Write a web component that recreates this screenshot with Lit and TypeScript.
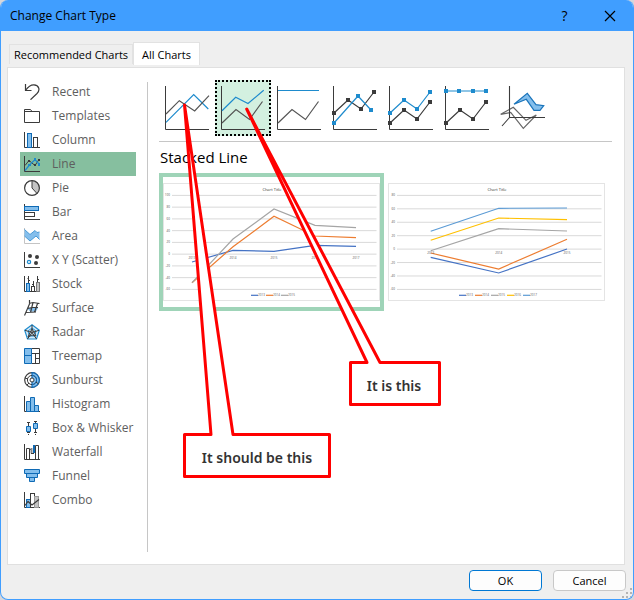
import { LitElement, html, svg, css } from "lit";
import { customElement, property, state } from "lit/decorators.js";
import { classMap } from "lit/directives/class-map.js";

const INK = "#3b3b3b";
const BLUE = "#1e8bcd";
const EDGE = "#0f6ab5";
const SKY = "#83beec";
const GREY = "#c4c4c4";

const axis = svg`<path d="M.5 0V15.5H16" stroke=${INK} fill="none"/>`;

const categories = [
  { name: "Recent", icon: svg`<path d="M1.5 0V6.5H7.5M1.5 6.5C4 3 7 .7 10 .9C15 1.2 16.5 6 13 9.5L6.5 15.7" fill="none" stroke=${INK} stroke-width="1.2"/>` },
  { name: "Templates", icon: svg`<path d="M.5 14.5V1.5H6.5L8 3.5H15.5V14.5ZM.5 3.5H8" fill="#fff" stroke=${INK}/>` },
  { name: "Column", icon: svg`${axis}<rect x="3.5" y="1.5" width="4" height="14" fill=${SKY} stroke=${EDGE}/><rect x="9.5" y="5.5" width="4" height="10" fill="#fff" stroke=${INK}/>` },
  { name: "Line", icon: svg`${axis}<path d="M1 9.5L5 4.5L11 9.5L15 3.5" fill="none" stroke=${INK}/><path d="M4 4h2v2H4zM10 8h2v2h-2zM14 3h2v2h-2z" fill=${INK}/><path d="M1 14.5L5.5 9L11 3.5L15 8" fill="none" stroke=${BLUE} stroke-width="1.2"/><path d="M4 8h3v2H4zM10 2h2v3h-2zM14 7h2v3h-2z" fill=${BLUE}/>` },
  { name: "Pie", icon: svg`<circle cx="8" cy="8" r="7.4" fill="#fff"/><path d="M8 8V.5A7.5 7.5 0 0 1 13 13.5Z" fill=${GREY}/><circle cx="8" cy="8" r="7.4" fill="none" stroke=${INK} stroke-width="1.2"/><path d="M8 .5V8L13 13.5" fill="none" stroke=${INK}/>` },
  { name: "Bar", icon: svg`${axis}<rect x=".5" y="2.5" width="14" height="4" fill=${SKY} stroke=${EDGE}/><rect x=".5" y="8.5" width="10" height="4" fill="#fff" stroke=${INK}/>` },
  { name: "Area", icon: svg`<path d="M.5 0V15.5H16" stroke=${GREY} fill="none"/><path d="M.5 1.5L6 6.5L11 2.5L13 4.5L15.5 4V11.5L12 8L6 13L.5 8Z" fill=${SKY}/><path d="M.5 1.5L6 6.5L11 2.5L13 4.5L15.5 4M.5 8L6 13L12 8L15.5 11.5" fill="none" stroke="#4a9ad6"/>` },
  { name: "X Y (Scatter)", icon: svg`${axis}<circle cx="6" cy="4" r="2" fill=${INK}/><circle cx="13" cy="5" r="2" fill=${INK}/><circle cx="12" cy="11" r="2" fill=${INK}/><circle cx="5" cy="10" r="1.6" fill="#fff" stroke=${BLUE} stroke-width="1.3"/>` },
  { name: "Stock", icon: svg`${axis}<path d="M4.5 0V7M3.5 2.5H4.5M4.5 4.5H6M9.5 5V10M8 8.5H9.5M13.5 0V6M13.5 3.5H15" stroke=${INK} fill="none"/><rect x="2.5" y="7.5" width="3" height="8" fill=${SKY} stroke=${EDGE}/><rect x="7.5" y="10.5" width="3" height="5" fill="#fff" stroke=${INK}/><rect x="12.5" y="6.5" width="3" height="9" fill=${GREY} stroke="#777"/>` },
  { name: "Surface", icon: svg`<path d="M3 8L6 11.5H12L14 8Z" fill=${SKY}/><path d="M5.5 0V4L.5 15.5M5 3.5L9 2.5L15.5 3.5M3.5 8.5L8 7.5H14M2 12.5L12 12M9 2.5L6.5 12.5M13.5 3.5L10.5 12.5" fill="none" stroke=${INK} stroke-width="1.2"/>` },
  { name: "Radar", icon: svg`<path d="M8 .8L15.3 6.2L12.5 15H3.5L.7 6.2Z" fill="#d9ebf8" stroke=${BLUE} stroke-width="1.2"/><path d="M8 4L12 7L10.6 12H5.4L4 7Z" fill="none" stroke=${BLUE}/><path d="M8 1V8.5L15 6.3M8 8.5L12.5 15M8 8.5L3.5 15M8 8.5L1 6.3M8 5L10 8L12 12L8 11L4 13L6 8.5Z" fill="none" stroke=${INK}/>` },
  { name: "Treemap", icon: svg`<rect x=".5" y=".5" width="7" height="15" fill=${SKY}/><path d="M7.5 .5H15.5V15.5H7.5M7.5 5.5H15.5M11.5 5.5V15.5M11.5 10.5H15.5" fill="none" stroke=${INK}/><path d="M.5 .5H7.5V15.5H.5ZM.5 7.5H7.5" fill="none" stroke=${EDGE}/>` },
  { name: "Sunburst", icon: svg`<circle cx="8" cy="8" r="7.3" fill="#fff" stroke=${INK} stroke-width="1.2"/><path d="M8 .7A7.3 7.3 0 0 1 8 15.3Z" fill=${SKY} stroke=${EDGE} stroke-width="1.2"/><circle cx="8" cy="8" r="4.6" fill="none" stroke=${INK}/><path d="M8 3.4A4.6 4.6 0 0 1 8 12.6" fill="none" stroke=${EDGE}/><circle cx="8" cy="8" r="2" fill="#fff" stroke=${INK}/><path d="M1 6L4 7M3 13L5 11M12 10L14.5 12" stroke=${INK}/>` },
  { name: "Histogram", icon: svg`${axis}<path d="M2.5 15.5V5.5H6.5V1.5H10.5V9.5H14.5V15.5ZM6.5 5.5V15.5M10.5 9.5V15.5" fill=${SKY} stroke=${EDGE}/>` },
  { name: "Box & Whisker", icon: svg`<path d="M4.5 2V13M3 2.5H6M3 12.5H6M4.5 14V15M11.5 1V13M10 1.5H13M10 12.5H13M11.5 14V15" stroke=${INK} fill="none"/><path d="M2.5 6.5h4v5h-4zM9.5 3.5h4v5h-4z" fill=${SKY} stroke=${EDGE}/>` },
  { name: "Waterfall", icon: svg`${axis}<path d="M2.5 15.5V4.5H5.5V15.5M5.5 5.5H7.5V9M11.5 15.5V1.5H14.5V15.5" fill="none" stroke=${INK}/><path d="M7.5 4V9.5" stroke="#888" stroke-width="2"/><path d="M10 1V9" stroke=${EDGE} stroke-width="2"/><path d="M7 9.5H10" stroke=${INK}/>` },
  { name: "Funnel", icon: svg`<path d="M.5 1.5h15v4H.5zM2.5 5.5h11v4h-11zM5.5 9.5h5v4h-5z" fill=${SKY} stroke=${EDGE}/>` },
  { name: "Combo", icon: svg`${axis}<rect x="2.5" y="7.5" width="4" height="8" fill=${SKY} stroke=${EDGE}/><rect x="6.5" y="1.5" width="4" height="14" fill="#fff" stroke=${INK}/><rect x="10.5" y="4.5" width="4" height="11" fill=${GREY} stroke="#999"/><path d="M1 13.5L4 9.5L8 13L15 7.5" fill="none" stroke=${INK} stroke-width="1.2"/>` },
];

type Pt = [number, number];
const toPoints = (p: Pt[]) => p.map((q) => q.join(",")).join(" ");
const line = (p: Pt[], color: string) =>
  svg`<polyline points=${toPoints(p)} fill="none" stroke=${color} stroke-width="1.2"/>`;
const marked = (p: Pt[], color: string) =>
  svg`${line(p, color)}${p.map(([x, y]) => svg`<rect x=${x - 2} y=${y - 2} width="4" height="4" fill=${color}/>`)}`;
const bigAxis = svg`<path d="M6.5 6V49.5H50" fill="none" stroke=${INK}/>`;
const LOW: Pt[] = [[7, 43], [21, 29.5], [34.5, 39.5], [47.5, 21.5]];

const lineTypes = [
  { name: "Line", icon: svg`${bigAxis}${line([[7, 42.3], [34.7, 14.5], [49.3, 29]], BLUE)}${line([[7, 34], [20.3, 20.7], [35.7, 31], [50, 15.7]], "#555")}` },
  { name: "Stacked Line", icon: svg`${bigAxis}${line([[7, 30.7], [20.7, 17.3], [33, 23.5], [48.7, 10.3]], BLUE)}${line(LOW, "#555")}` },
  { name: "100% Stacked Line", icon: svg`${bigAxis}${line([[7, 10.5], [48, 10.5]], BLUE)}${line(LOW, "#555")}` },
  { name: "Line with Markers", icon: svg`${bigAxis}${marked([[7, 33], [21, 20], [34, 29], [47, 12]], INK)}${marked([[7, 43], [31, 16], [44, 30]], BLUE)}` },
  { name: "Stacked Line with Markers", icon: svg`${bigAxis}${marked([[7, 33], [21, 20], [34, 29], [47, 12]], BLUE)}${marked([[7, 43], [21, 30], [34, 39], [47, 22]], INK)}` },
  { name: "100% Stacked Line with Markers", icon: svg`${bigAxis}${marked([[7, 11], [20, 11], [34, 11], [47, 11]], BLUE)}${marked([[7, 43], [21, 30], [34, 39], [47, 22]], INK)}` },
  {
    name: "3-D Line",
    icon: svg`<path d="M5.7 34.3L18.3 27.3L31 40.3L41.3 35L28.3 48.3L15.7 32.5Z" fill="#fff" stroke="#666" stroke-width="1.2"/>
      <path d="M14.5 6V37.5H50M14.5 37.5L7 46" fill="none" stroke=${INK} stroke-width="1.1"/>
      <path d="M19 24.3L32.3 13.3L41 24.7L48.7 25.7L45 30.3H39L31.3 19.3Z" fill=${SKY} stroke="#1b75bb" stroke-width="1.2"/>`,
  },
];

interface Chart {
  name: string;
  ticks: number[];
  step: number;
  xs: number[];
  labels: string[];
  labelY: number;
  legendX: number;
  legendStep: number;
  series: { name: string; color: string; ys: number[] }[];
}

const charts: Chart[] = [
  {
    name: "Stacked line by year",
    ticks: [100, 80, 60, 40, 20, 0, -20, -40, -60],
    step: 11.75,
    xs: [29, 70, 111, 152, 193],
    labels: ["2013", "2014", "2015", "2016", "2017"],
    labelY: 76,
    legendX: 88,
    legendStep: 15,
    series: [
      { name: "2013", color: "#4472c4", ys: [79, 67.3, 68.3, 62.3, 63.3] },
      { name: "2014", color: "#ed7d31", ys: [99.7, 63.7, 33.3, 53, 54.7] },
      { name: "2015", color: "#a5a5a5", ys: [99.7, 56, 26, 42.3, 44.7] },
    ],
  },
  {
    name: "Stacked line by series",
    ticks: [80, 60, 40, 20, 0, -20, -40, -60],
    step: 13.43,
    xs: [42.7, 110.7, 179],
    labels: ["2013", "2014", "2015"],
    labelY: 71,
    legendX: 71,
    legendStep: 16,
    series: [
      { name: "2013", color: "#4472c4", ys: [74.3, 90, 66] },
      { name: "2014", color: "#ed7d31", ys: [70, 86, 56.3] },
      { name: "2015", color: "#a5a5a5", ys: [67.7, 45.7, 48] },
      { name: "2016", color: "#ffc000", ys: [57.3, 35, 36.7] },
      { name: "2017", color: "#5b9bd5", ys: [48.3, 25.3, 25] },
    ],
  },
];

@customElement("chart-preview")
class ChartPreview extends LitElement {
  @property({ attribute: false }) chart!: Chart;

  static styles = css`
    :host { display: block; }
    svg { display: block; width: 217px; height: 118px; }
    text { font-family: "Open Sans", sans-serif; font-size: 3px; fill: #555; }
    .title { font-size: 4px; fill: #333; }
    .frame { fill: #fff; stroke: #e4e4e4; }
    .grid { stroke: #d9d9d9; }
  `;

  render() {
    const c = this.chart;
    return html`<svg viewBox="0 0 217 118" aria-hidden="true">
      <rect class="frame" x=".5" y=".5" width="216" height="117" />
      <text class="title" x="109" y="8" text-anchor="middle">Chart Title</text>
      ${c.ticks.map((t, i) => {
        const y = 12.4 + i * c.step;
        return svg`<path class="grid" d="M9 ${y}H213.5"/><text x="7" y=${y + 1} text-anchor="end">${t}</text>`;
      })}
      ${c.series.map((s) => line(c.xs.map((x, i): Pt => [x, s.ys[i]]), s.color))}
      ${c.labels.map((l, i) => svg`<text x=${c.xs[i]} y=${c.labelY} text-anchor="middle">${l}</text>`)}
      ${c.series.map((s, i) => {
        const x = c.legendX + i * c.legendStep;
        return svg`${line([[x, 112.3], [x + 7, 112.3]], s.color)}<text x=${x + 7} y="113.4">${s.name}</text>`;
      })}
    </svg>`;
  }
}

@customElement("app-root")
class AppRoot extends LitElement {
  @state() private category = "Line";
  @state() private lineType = "Stacked Line";
  @state() private preview = 0;

  static styles = css`
    :host {
      display: block;
      min-height: 100vh;
      background: #d6d6da;
      font-family: "Open Sans", "Noto Sans", sans-serif;
      font-size: 12px;
      color: #000;
    }
    * { box-sizing: border-box; }
    button { font: inherit; color: inherit; background: none; border: 0; padding: 0; margin: 0; }
    svg { display: block; }
    .dialog {
      position: relative;
      display: flex;
      flex-direction: column;
      min-height: 100vh;
      border: 1px solid #409eff;
      border-top: 0;
      border-radius: 8px;
      background: #efefef;
      overflow: hidden;
    }
    .titlebar {
      display: flex;
      align-items: center;
      height: 31px;
      padding: 0 1px 0 9px;
      background: #409eff;
    }
    .titlebar h1 { flex: 1; margin: 0; font-size: 12px; font-weight: 400; }
    .caption { display: grid; place-items: center; width: 45px; height: 31px; font-size: 14px; }
    .tabs { display: flex; align-items: flex-start; height: 36px; padding: 11px 8px 0; font-size: 11px; }
    .tab {
      height: 20px;
      margin-top: 2px;
      padding: 0 4px;
      border: 1px solid #e2e2e2;
      border-bottom: 0;
      white-space: nowrap;
    }
    .tab.active { height: 23px; margin-top: 0; padding: 0 8px; background: #fff; }
    .panel {
      flex: 1;
      display: flex;
      margin: 0 8px 0 6px;
      padding: 12px;
      border: 1px solid #e0e0e0;
      background: #fff;
    }
    .categories { flex: none; width: 116px; margin: 0; padding: 0; list-style: none; }
    .category {
      display: flex;
      align-items: center;
      gap: 12px;
      width: 100%;
      height: 24px;
      padding-left: 4px;
      color: #5e5e5e;
      line-height: 16px;
      white-space: nowrap;
    }
    .category.active { background: #86bf9f; }
    .category svg { flex: none; width: 16px; height: 16px; }
    .rule { flex: none; width: 1px; margin: 2px 11px 0; background: #c6c6c6; }
    .gallery { position: relative; flex: 1; min-width: 0; }
    .types { display: flex; flex-wrap: wrap; padding-bottom: 5px; border-bottom: 1px solid #c6c6c6; }
    .type { position: relative; width: 56px; height: 56px; }
    .type svg { width: 56px; height: 56px; }
    .type.active { background: #d3f0e0; outline: 2px dotted #000; outline-offset: -2px; }
    h2 { margin: 0; padding-left: 1px; font-size: 15px; font-weight: 400; line-height: 31px; }
    .previews { display: flex; flex-wrap: wrap; }
    .preview { padding: 6px 0; border: 4px solid transparent; }
    .preview.active { border-color: #9fd4b8; }
    .callouts { position: absolute; top: 0; left: 0; width: 290px; height: 400px; pointer-events: none; }
    .callouts path { fill: #fff; stroke: #f00; stroke-width: 3px; stroke-linejoin: round; }
    .callouts text { font-family: "Noto Sans", sans-serif; font-size: 14px; font-weight: 600; fill: #333; }
    .footer { display: flex; justify-content: flex-end; gap: 11px; padding: 5px 7px 8px; font-size: 11px; }
    .push { width: 73px; height: 21px; border: 1px solid #c8c8c8; border-radius: 4px; background: #fdfdfd; }
    .push.default { border-color: #0078d4; }
    .grip { position: absolute; right: 1px; bottom: 1px; width: 10px; height: 10px; fill: #b4b4b4; }
  `;

  render() {
    return html`<div class="dialog" role="dialog" aria-labelledby="title">
      <header class="titlebar">
        <h1 id="title">Change Chart Type</h1>
        <button class="caption" aria-label="Help">?</button>
        <button class="caption" aria-label="Close">
          <svg width="12" height="12"><path d="M1 1L11 11M11 1L1 11" stroke="#000" stroke-width="1.2" /></svg>
        </button>
      </header>
      <div class="tabs" role="tablist">
        <button class="tab" role="tab" aria-selected="false">Recommended Charts</button>
        <button class="tab active" role="tab" aria-selected="true">All Charts</button>
      </div>
      <main class="panel">
        <ul class="categories">
          ${categories.map(
            (c) => html`<li>
              <button
                class=${classMap({ category: true, active: c.name === this.category })}
                @click=${() => (this.category = c.name)}
              >
                <svg viewBox="0 0 16 16" aria-hidden="true">${c.icon}</svg>${c.name}
              </button>
            </li>`
          )}
        </ul>
        <div class="rule"></div>
        <section class="gallery">
          <div class="types">
            ${lineTypes.map(
              (t) => html`<button
                class=${classMap({ type: true, active: t.name === this.lineType })}
                aria-label=${t.name}
                @click=${() => (this.lineType = t.name)}
              ><svg viewBox="0 0 56 56" aria-hidden="true">${t.icon}</svg></button>`
            )}
          </div>
          <h2>${this.lineType}</h2>
          <div class="previews">
            ${charts.map(
              (c, i) => html`<button
                class=${classMap({ preview: true, active: i === this.preview })}
                aria-label=${c.name}
                @click=${() => (this.preview = i)}
              ><chart-preview .chart=${c}></chart-preview></button>`
            )}
          </div>
          <svg class="callouts" viewBox="0 0 290 400">
            <path d="M52 354.500L25.500 25L74 354.500H170.500V396.500H25.500V354.500Z" />
            <text x="98" y="383" text-anchor="middle">It should be this</text>
            <path d="M208 282.500L87.700 29L221 282.500H280.500V324.500H191.500V282.500Z" />
            <text x="235" y="311" text-anchor="middle">It is this</text>
          </svg>
        </section>
      </main>
      <footer class="footer">
        <button class="push default">OK</button>
        <button class="push">Cancel</button>
      </footer>
      <svg class="grip" viewBox="0 0 10 10" aria-hidden="true">
        <path d="M8 0h2v2H8zM4 4h2v2H4zM8 4h2v2H8zM0 8h2v2H0zM4 8h2v2H4zM8 8h2v2H8z" />
      </svg>
    </div>`;
  }
}
